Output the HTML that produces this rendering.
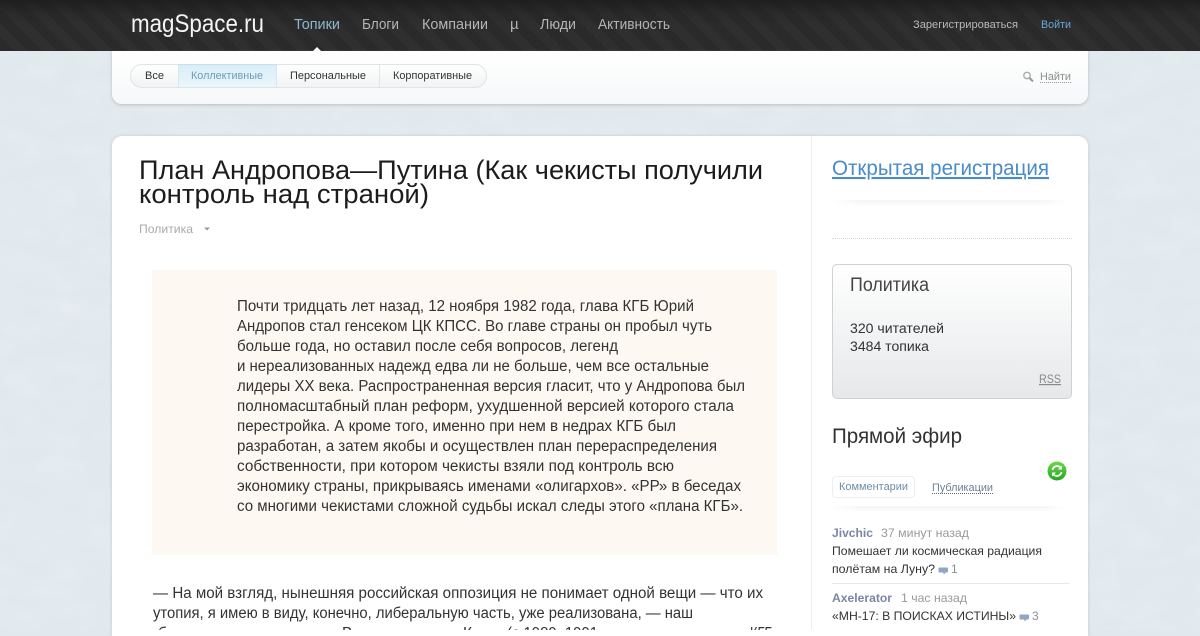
<!DOCTYPE html>
<html lang="ru"><head><meta charset="utf-8"><title>План Андропова—Путина</title>
<style>
html,body{margin:0;padding:0;width:1200px;height:630px;overflow:hidden;background:#e1e9ee;font-family:"Liberation Sans",sans-serif}
div{position:absolute;box-sizing:border-box}
svg{position:absolute;left:0;top:0}
text{font-family:"Liberation Sans",sans-serif}
</style></head><body>
<svg width="1200" height="630" style="opacity:.22"><filter id="n"><feTurbulence type="fractalNoise" baseFrequency=".025 .05" numOctaves="4" seed="4"/><feColorMatrix values="0 0 0 0 1 0 0 0 0 1 0 0 0 0 1 1.3 0 0 0 -.45"/></filter><rect width="1200" height="630" filter="url(#n)"/></svg>
<div style="left:0;top:0;width:1200px;height:51px;background:linear-gradient(rgba(28,28,28,.85),rgba(30,30,30,.25) 14px,rgba(42,42,42,0) 26px),repeating-linear-gradient(45deg,#2a2a2a 0 10px,#2f2f2f 10px 20px)"></div>
<div style="left:112px;top:51px;width:976px;height:53px;border-radius:0 0 10px 10px;background:linear-gradient(#fff,#f6f8f9);box-shadow:0 1px 3px rgba(120,140,155,.45)"></div>
<div style="left:130px;top:64px;width:357px;height:24px;border:1px solid #e0e4e7;border-radius:12px;background:linear-gradient(#fff,#f1f3f4)"></div>
<div style="left:178px;top:64px;width:99px;height:24px;background:linear-gradient(#d9eef8,#eaf6fb);border:1px solid #dbe5ea;border-top-color:#c5e0ee"></div>
<div style="left:379px;top:65px;width:1px;height:22px;background:#e0e4e7"></div>
<div style="left:112px;top:136px;width:976px;height:500px;border-radius:10px 10px 0 0;background:#fff;box-shadow:0 0 3px rgba(120,140,155,.35)"></div>
<div style="left:811px;top:136px;width:1px;height:494px;background:#eceeef"></div>
<div style="left:152px;top:270px;width:625px;height:285px;background:#fdf8f2"></div>
<div style="left:832px;top:200px;width:238px;height:6px;background:linear-gradient(#f2f4f5,#fff);-webkit-mask-image:linear-gradient(90deg,transparent,#000 12%,#000 88%,transparent);mask-image:linear-gradient(90deg,transparent,#000 12%,#000 88%,transparent)"></div>
<div style="left:832px;top:238px;width:240px;height:0;border-top:1px dotted #d8d8d8"></div>
<div style="left:832px;top:264px;width:240px;height:135px;border:1px solid #cfd2d4;border-radius:5px;background:linear-gradient(#fff,#e6e8ea)"></div>
<div style="left:832px;top:476px;width:83px;height:22px;border:1px solid #eceff1;border-radius:4px;background:#fff"></div>
<div style="left:832px;top:506px;width:238px;height:6px;background:linear-gradient(#f2f4f5,#fff);-webkit-mask-image:linear-gradient(90deg,transparent,#000 12%,#000 88%,transparent);mask-image:linear-gradient(90deg,transparent,#000 12%,#000 88%,transparent)"></div>
<div style="left:832px;top:583px;width:238px;height:1px;background:#e8e8e8"></div>
<svg width="1200" height="630">
<defs><linearGradient id="g" x1="0" y1="0" x2="0" y2="1"><stop offset="0" stop-color="#6ed64e"/><stop offset="1" stop-color="#22a81e"/></linearGradient></defs>
<path d="M313 51l4-4 4 4z" fill="#fff"/>
<text x="131" y="32" font-size="25" fill="#f4f4f4" textLength="133" lengthAdjust="spacingAndGlyphs">magSpace.ru</text>
<g font-size="15" fill="#b4b4b4">
<text x="294" y="29" fill="#8fb6cc" textLength="46" lengthAdjust="spacingAndGlyphs">Топики</text>
<text x="362" y="29" textLength="37" lengthAdjust="spacingAndGlyphs">Блоги</text>
<text x="422" y="29" textLength="66" lengthAdjust="spacingAndGlyphs">Компании</text>
<text x="510" y="29">µ</text>
<text x="540" y="29" textLength="36" lengthAdjust="spacingAndGlyphs">Люди</text>
<text x="598" y="29" textLength="72" lengthAdjust="spacingAndGlyphs">Активность</text>
</g>
<text x="913" y="28" font-size="11" fill="#b8b8b8" textLength="105" lengthAdjust="spacingAndGlyphs">Зарегистрироваться</text>
<text x="1041" y="28" font-size="11" fill="#6ba7d8" textLength="30" lengthAdjust="spacingAndGlyphs">Войти</text>
<g font-size="11" fill="#333">
<text x="145" y="79" textLength="19" lengthAdjust="spacingAndGlyphs">Все</text>
<text x="191" y="79" fill="#6f9bb3" textLength="72" lengthAdjust="spacingAndGlyphs">Коллективные</text>
<text x="290" y="79" textLength="76" lengthAdjust="spacingAndGlyphs">Персональные</text>
<text x="393" y="79" textLength="79" lengthAdjust="spacingAndGlyphs">Корпоративные</text>
</g>
<circle cx="1027" cy="75.5" r="3.2" fill="none" stroke="#a8a8a8" stroke-width="1.3"/><path d="M1029.5 78l3.5 3.5" stroke="#999" stroke-width="2"/>
<text x="1040" y="80" font-size="11" fill="#8c8c8c" textLength="31" lengthAdjust="spacingAndGlyphs">Найти</text>
<path d="M1040 82.5h31" stroke="#999" stroke-dasharray="1 1"/>

<g font-size="27" fill="#1c1c1c">
<text x="139" y="179" textLength="624" lengthAdjust="spacingAndGlyphs">План Андропова—Путина (Как чекисты получили</text>
<text x="139" y="203" textLength="290" lengthAdjust="spacingAndGlyphs">контроль над страной)</text>
</g>
<text x="139" y="233" font-size="12" fill="#aaa" textLength="54" lengthAdjust="spacingAndGlyphs">Политика</text>
<path d="M204 227.500h6l-3 3z" fill="#999"/>

<g font-size="15.500" fill="#333">
<text x="237" y="311" textLength="457" lengthAdjust="spacingAndGlyphs">Почти тридцать лет назад, 12 ноября 1982 года, глава КГБ Юрий</text>
<text x="237" y="331" textLength="475" lengthAdjust="spacingAndGlyphs">Андропов стал генсеком ЦК КПСС. Во главе страны он пробыл чуть</text>
<text x="237" y="351" textLength="381" lengthAdjust="spacingAndGlyphs">больше года, но оставил после себя вопросов, легенд</text>
<text x="237" y="371" textLength="472" lengthAdjust="spacingAndGlyphs">и нереализованных надежд едва ли не больше, чем все остальные</text>
<text x="237" y="391" textLength="508" lengthAdjust="spacingAndGlyphs">лидеры XX века. Распространенная версия гласит, что у Андропова был</text>
<text x="237" y="411" textLength="497" lengthAdjust="spacingAndGlyphs">полномасштабный план реформ, ухудшенной версией которого стала</text>
<text x="237" y="431" textLength="439" lengthAdjust="spacingAndGlyphs">перестройка. А кроме того, именно при нем в недрах КГБ был</text>
<text x="237" y="451" textLength="480" lengthAdjust="spacingAndGlyphs">разработан, а затем якобы и осуществлен план перераспределения</text>
<text x="237" y="471" textLength="437" lengthAdjust="spacingAndGlyphs">собственности, при котором чекисты взяли под контроль всю</text>
<text x="237" y="491" textLength="504" lengthAdjust="spacingAndGlyphs">экономику страны, прикрываясь именами «олигархов». «РР» в беседах</text>
<text x="237" y="511" textLength="506" lengthAdjust="spacingAndGlyphs">со многими чекистами сложной судьбы искал следы этого «плана КГБ».</text>
<text x="153" y="598" textLength="610" lengthAdjust="spacingAndGlyphs">— На мой взгляд, нынешняя российская оппозиция не понимает одной вещи — что их</text>
<text x="153" y="618" textLength="540" lengthAdjust="spacingAndGlyphs">утопия, я имею в виду, конечно, либеральную часть, уже реализована, — наш</text>
<text x="158" y="638">б</text><text x="342" y="638">В</text><text x="463" y="638">К</text>
<text x="507" y="638" textLength="91" lengthAdjust="spacingAndGlyphs">(с 1989–1991</text><text x="750" y="638" textLength="23" lengthAdjust="spacingAndGlyphs">КГБ</text>
</g>

<text x="832" y="175" font-size="21" fill="#4a8bc9" text-decoration="underline" textLength="217" lengthAdjust="spacingAndGlyphs">Открытая регистрация</text>
<text x="850" y="291" font-size="19" fill="#444" textLength="79" lengthAdjust="spacingAndGlyphs">Политика</text>
<text x="850" y="333" font-size="13.500" fill="#333" textLength="94" lengthAdjust="spacingAndGlyphs">320 читателей</text>
<text x="850" y="351" font-size="13.500" fill="#333" textLength="79" lengthAdjust="spacingAndGlyphs">3484 топика</text>
<text x="1039" y="383" font-size="12" fill="#888" text-decoration="underline" textLength="22" lengthAdjust="spacingAndGlyphs">RSS</text>
<text x="832" y="443" font-size="21" fill="#333" textLength="130" lengthAdjust="spacingAndGlyphs">Прямой эфир</text>
<circle cx="1057" cy="471" r="9.500" fill="url(#g)"/>
<path d="M1052.500 470a4.700 4.700 0 0 1 8-2.500M1061.500 472a4.700 4.700 0 0 1-8 2.500" fill="none" stroke="#fff" stroke-width="1.800"/>
<path d="M1062 465.500v4h-4zM1052 476.500v-4h4z" fill="#fff"/>
<text x="839" y="490" font-size="11" fill="#6d8ea8" textLength="69" lengthAdjust="spacingAndGlyphs">Комментарии</text>
<text x="932" y="491" font-size="11" fill="#6d8296" textLength="61" lengthAdjust="spacingAndGlyphs">Публикации</text>
<path d="M932 493.500h61" stroke="#667" stroke-dasharray="1 1"/>
<g font-size="12">
<text x="832" y="537" font-weight="bold" fill="#7b86a6" textLength="41" lengthAdjust="spacingAndGlyphs">Jivchic</text>
<text x="881" y="537" fill="#999" textLength="88" lengthAdjust="spacingAndGlyphs">37 минут назад</text>
<text x="832" y="555" fill="#333" textLength="210" lengthAdjust="spacingAndGlyphs">Помешает ли космическая радиация</text>
<text x="832" y="573" fill="#333" textLength="103" lengthAdjust="spacingAndGlyphs">полётам на Луну?</text>
<text x="951" y="573" fill="#8a8f96">1</text>
<text x="832" y="602" font-weight="bold" fill="#7b86a6" textLength="60" lengthAdjust="spacingAndGlyphs">Axelerator</text>
<text x="901" y="602" fill="#999" textLength="66" lengthAdjust="spacingAndGlyphs">1 час назад</text>
<text x="832" y="620" fill="#333" textLength="184" lengthAdjust="spacingAndGlyphs">«МН-17: В ПОИСКАХ ИСТИНЫ»</text>
<text x="1032" y="620" fill="#8a8f96">3</text>
</g>
<path d="M940 567.500h7a1 1 0 0 1 1 1v3a1 1 0 0 1-1 1h-1.500l-1.500 2-1-2h-3.500a1 1 0 0 1-1-1v-3a1 1 0 0 1 1-1z" fill="#8fa7c4"/>
<path d="M1021 614.500h7a1 1 0 0 1 1 1v3a1 1 0 0 1-1 1h-1.500l-1.500 2-1-2h-3.500a1 1 0 0 1-1-1v-3a1 1 0 0 1 1-1z" fill="#8fa7c4"/>
</svg>
</body></html>
